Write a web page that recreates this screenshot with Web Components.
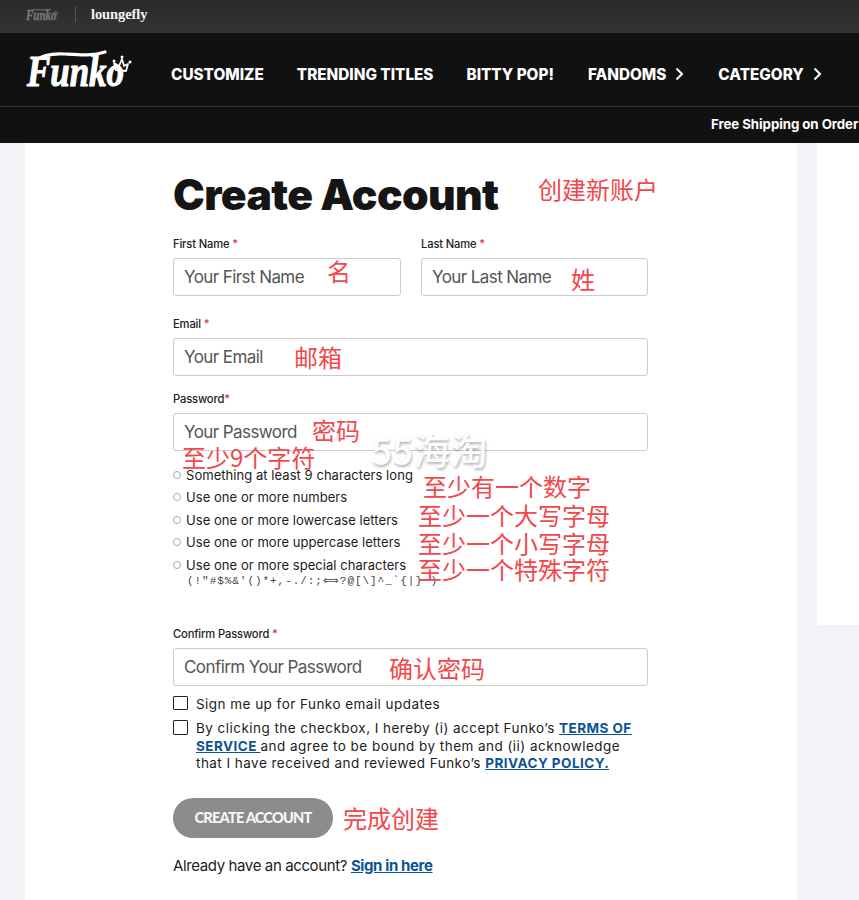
<!DOCTYPE html>
<html lang="en">
<head>
<meta charset="UTF-8">
<title>Create Account</title>
<style>
    html, body { margin: 0; padding: 0; height: 900px; overflow: hidden; }
    body { background: #f3f2f7; font-family: Inter, "Liberation Sans", sans-serif; color: #1c1c1c; position: relative; }
</style>
</head>
<body>
<script>
    // small helper, every element gets an open shadow root with its own style
    function define(name, html, after) {
        customElements.define(name, class extends HTMLElement {
            connectedCallback() {
                if (this.shadowRoot) return
                this.attachShadow({mode: 'open'}).innerHTML = html
                if (after) after(this)
            }
        })
    }

    define('funko-logo', `
        <style>
            :host { display: block; line-height: 0; }
            svg { display: block; width: 100%; height: 100%; overflow: visible; }
            text { font-family: "Liberation Serif", serif; font-weight: 700; font-style: italic; fill: var(--logo-color, #fff);
                stroke: var(--logo-color, #fff); stroke-width: 1.1px; }
            path { fill: none; stroke: var(--logo-color, #fff); }
            circle { fill: var(--logo-color, #fff); }
        </style>
        <svg viewBox="0 0 105 38">
            <text x="0" y="36" font-size="44" textLength="97" lengthAdjust="spacingAndGlyphs">Funko</text>
            <path d="M8 13C11 6 24 3 38 4C54 5 66 6 78 2" stroke-width="3.2" stroke-linecap="round"/>
            <path d="M89 20l-2-7 5 3 3-7 2 7 4-2-2 7z" stroke-width="1.800" stroke-linejoin="round"/>
            <circle cx="87" cy="11" r="1.500"/><circle cx="95" cy="7" r="1.500"/><circle cx="103" cy="12" r="1.500"/>
        </svg>`)

    define('top-bar', `
        <style>
            :host { display: flex; align-items: center; height: 33px; padding: 0 0 5px 26px; box-sizing: border-box;
                background: linear-gradient(#2a2a2a, #343434); }
            funko-logo { width: 33px; height: 13px; --logo-color: #777; }
            i { width: 1px; height: 16px; background: #555; margin: 0 15px 0 16px; }
            b { font: 700 14.5px/1 "Liberation Serif", serif; color: #f4f4f4; letter-spacing: -.1px; }
        </style>
        <funko-logo></funko-logo><i></i><b>loungefly</b>`)

    define('nav-link', `
        <style>
            :host { display: flex; align-items: center; gap: 9px; font: 800 15.3px/1 Inter, sans-serif; color: #fff; white-space: nowrap; }
            :host([more]) { margin-left: 1px; }
            svg { width: 9px; height: 14px; display: none; }
            :host([more]) svg { display: block; }
        </style>
        <slot></slot>
        <svg viewBox="0 0 9 14"><path d="M1.5 1.5L7 7l-5.500 5.500" fill="none" stroke="#fff" stroke-width="2"/></svg>`)

    define('main-header', `
        <style>
            :host { display: flex; align-items: center; height: 74px; padding: 10px 0 0 27px; box-sizing: border-box;
                background: #111; border-bottom: 1px solid #333; }
            funko-logo { width: 105px; height: 38px; margin: -12px 39px 0 0; }
            nav { display: flex; gap: 33px; }
        </style>
        <funko-logo></funko-logo>
        <nav><slot></slot></nav>`)

    define('promo-bar', `
        <style>
            :host { display: block; height: 36px; background: #111; color: #fff; overflow: hidden; white-space: nowrap;
                padding-left: 711px; box-sizing: border-box; font: 700 13.3px/35px Inter, sans-serif; letter-spacing: -.08px; }
        </style>
        <slot></slot>`)

    define('page-columns', `
        <style>
            :host { display: flex; gap: 20px; align-items: flex-start; padding-left: 25px; }
            ::slotted(side-panel) { flex: 1; }
        </style>
        <slot></slot>`)

    define('side-panel', `
        <style>:host { display: block; height: 482px; background: #fff; }</style>`)

    define('form-card', `
        <style>
            :host { display: block; width: 772px; height: 757px; box-sizing: border-box; padding: 27px 149px 0 148px; background: #fff; }
            h1 { margin: 0 0 17px; font: 900 42.6px/50px Inter, sans-serif; letter-spacing: -.6px; color: #151515; white-space: nowrap; }
        </style>
        <h1>Create Account</h1>
        <slot></slot>`)

    define('form-field', `
        <style>
            :host { display: block; }
            label { display: block; font: 500 11.2px/14px Inter, sans-serif; letter-spacing: -.15px; color: #222; margin-bottom: 7px; }
            div { height: 38px; box-sizing: border-box; border: 1px solid #ccc; border-radius: 3px; padding-left: 10px;
                font: 400 17px/37px Inter, sans-serif; letter-spacing: -.58px; color: #555; background: #fff; }
        </style>
        <label><slot name="label"></slot></label>
        <div role="textbox"><slot></slot></div>`)

    define('field-pair', `
        <style>:host { display: grid; grid-template-columns: 228px 227px; gap: 20px; }</style>
        <slot></slot>`)

    define('rule-item', `
        <style>
            :host { display: flex; align-items: center; height: 22.5px; font: 400 13px/22.5px Inter, sans-serif; letter-spacing: .05px; color: #1c1c1c; }
            i { width: 6px; height: 6px; border: 1px solid #aaa; border-radius: 50%; margin-right: 5px; flex: none; }
        </style>
        <i></i><slot></slot>`)

    define('check-row', `
        <style>
            :host { display: flex; gap: 8.500px; font: 400 13.5px/17.5px Inter, sans-serif; letter-spacing: .46px; color: #1c1c1c; }
            i { width: 12.500px; height: 12.500px; border: 1.500px solid #222; border-radius: 1px; flex: none; }
            ::slotted(a) { color: #0b5394; font-weight: 700; }
        </style>
        <i></i><div><slot></slot></div>`)

    define('round-button', `
        <style>
            :host { display: flex; align-items: center; justify-content: center; width: 160px; height: 40px; border-radius: 20px;
                background: #8c8c8c; color: #f6f6f6; font: 900 14.6px/1 Lato, sans-serif; letter-spacing: -.8px; }
        </style>
        <slot></slot>`)

    define('red-note', `
        <style>
            :host { position: absolute; font: 400 24px/26px "Noto Sans CJK SC", sans-serif; color: #f2474b; white-space: nowrap; }
        </style>
        <slot></slot>`)

    define('water-mark', `
        <style>
            :host { position: absolute; font: 500 37px/36px "Noto Sans CJK SC", sans-serif; color: #fdfdfd; white-space: nowrap;
                text-shadow: 1px 2px 3px rgba(0,0,0,.3); }
        </style>
        <slot></slot>`)
</script>
<style>
    .req { color: #d33; }
    .gap-email { margin-top: 21px; }
    .gap-pass { margin-top: 16px; }
    .rules { margin-top: 12.7px; }
    .chars { margin: -2px 0 0 14px; font: 400 11px/14px "Liberation Mono", monospace; letter-spacing: .95px; color: #444; white-space: nowrap; }
    .gap-confirm { margin-top: 38.8px; }
    .gap-check { margin-top: 10px; }
    .gap-check2 { margin-top: 7px; }
    .gap-button { margin-top: 25px; }
    .already { margin-top: 18px; font: 400 15px/20px Inter, sans-serif; letter-spacing: -.38px; color: #1c1c1c; }
    .already a { color: #0b5394; font-weight: 700; }
</style>

<top-bar></top-bar>
<main-header>
    <nav-link>CUSTOMIZE</nav-link>
    <nav-link>TRENDING TITLES</nav-link>
    <nav-link>BITTY POP!</nav-link>
    <nav-link more>FANDOMS</nav-link>
    <nav-link more>CATEGORY</nav-link>
</main-header>
<promo-bar>Free Shipping on Order</promo-bar>

<page-columns>
    <form-card>
        <field-pair>
            <form-field><span slot="label">First Name <span class="req">*</span></span>Your First Name</form-field>
            <form-field><span slot="label">Last Name <span class="req">*</span></span>Your Last Name</form-field>
        </field-pair>
        <form-field class="gap-email"><span slot="label">Email <span class="req">*</span></span>Your Email</form-field>
        <form-field class="gap-pass"><span slot="label">Password<span class="req">*</span></span>Your Password</form-field>
        <div class="rules">
            <rule-item>Something at least 9 characters long</rule-item>
            <rule-item>Use one or more numbers</rule-item>
            <rule-item>Use one or more lowercase letters</rule-item>
            <rule-item>Use one or more uppercase letters</rule-item>
            <rule-item>Use one or more special characters</rule-item>
            <div class="chars">(!"#$%&amp;'()*+,-./:;⟺?@[\]^_`{|}~)</div>
        </div>
        <form-field class="gap-confirm"><span slot="label">Confirm Password <span class="req">*</span></span>Confirm Your Password</form-field>
        <check-row class="gap-check">Sign me up for Funko email updates</check-row>
        <check-row class="gap-check2">By clicking the checkbox, I hereby (i) accept Funko’s <a href="#">TERMS OF SERVICE </a>and agree to be bound by them and (ii) acknowledge that I have received and reviewed Funko’s <a href="#">PRIVACY POLICY.</a></check-row>
        <round-button class="gap-button">CREATE ACCOUNT</round-button>
        <div class="already">Already have an account? <a href="#">Sign in here</a></div>
    </form-card>
    <side-panel></side-panel>
</page-columns>

<red-note style="left:538px;top:176px">创建新账户</red-note>
<red-note style="left:327px;top:258px">名</red-note>
<red-note style="left:571px;top:266px">姓</red-note>
<red-note style="left:294px;top:344px">邮箱</red-note>
<red-note style="left:312px;top:417px">密码</red-note>
<red-note style="left:182px;top:444px">至少9个字符</red-note>
<red-note style="left:423px;top:473px">至少有一个数字</red-note>
<red-note style="left:418px;top:502px">至少一个大写字母</red-note>
<red-note style="left:418px;top:530px">至少一个小写字母</red-note>
<red-note style="left:418px;top:556px">至少一个特殊字符</red-note>
<red-note style="left:389px;top:655px">确认密码</red-note>
<red-note style="left:343px;top:805px">完成创建</red-note>
<water-mark style="left:371px;top:431px">55海淘</water-mark>
</body>
</html>
